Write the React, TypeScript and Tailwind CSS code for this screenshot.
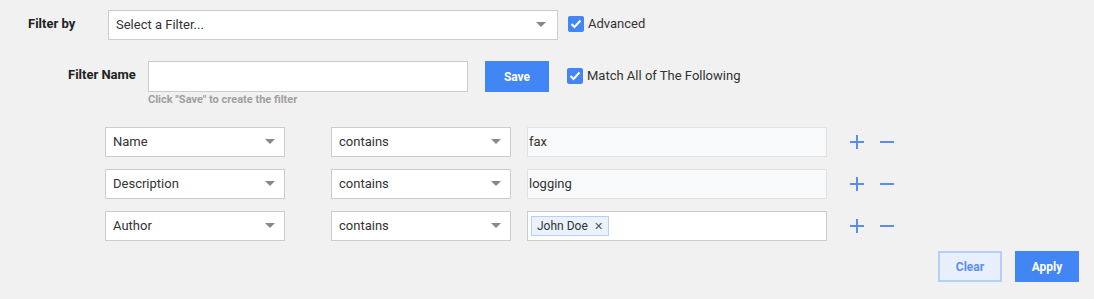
import React from 'react';

const Caret = () => (
  <svg width="10" height="6" viewBox="0 0 10 6" className="shrink-0">
    <path d="M0 0 L10 0 L5 5 Z" fill="#888" />
  </svg>
);

const Check = () => (
  <span className="w-4 h-4 rounded-[2px] bg-[#4285f4] flex items-center justify-center shrink-0">
    <svg width="12" height="10" viewBox="0 0 12 10">
      <path d="M1.5 5 L4.5 8 L10.5 1.5" stroke="#fff" strokeWidth="2" fill="none" />
    </svg>
  </span>
);

const Plus = () => (
  <svg width="14" height="14" viewBox="0 0 14 14">
    <path d="M0 7 H14 M7 0 V14" stroke="#5b8def" strokeWidth="2" />
  </svg>
);

const Minus = () => (
  <svg width="14" height="14" viewBox="0 0 14 14">
    <path d="M0 7 H14" stroke="#5b8def" strokeWidth="2" />
  </svg>
);

const Select = ({ label, width }: { label: string; width: string }) => (
  <div className={`${width} h-[30px] bg-white border border-[#cccccc] flex items-center justify-between pl-[7px] pr-[9px] text-[13px] text-[#333]`}>
    <span>{label}</span>
    <Caret />
  </div>
);

const rows = [
  { field: 'Name', value: 'fax' },
  { field: 'Description', value: 'logging' },
  { field: 'Author', value: '' },
];

const App = () => {
  return (
    <div className="w-[1094px] h-[299px] bg-[#f1f1f1] font-['Roboto',sans-serif] text-[#333] pt-[10px] relative">
      {/* Filter by */}
      <div className="flex items-center">
        <div className="w-[80px] ml-[28px] text-[13px] font-bold text-[#222] -mt-[3px]">Filter by</div>
        <div className="w-[450px] h-[30px] bg-white border border-[#cccccc] flex items-center justify-between pl-[7px] pr-[11px] text-[13px]">
          <span>Select a Filter...</span>
          <Caret />
        </div>
        <div className="flex items-center ml-[10px] gap-[4px] -mt-[3px] text-[13px]">
          <Check />
          <span>Advanced</span>
        </div>
      </div>

      {/* Filter name */}
      <div className="flex items-start mt-[21px]">
        <div className="ml-[68px] w-[80px] h-[30px] flex items-center text-[13px] font-bold text-[#222] -mt-[1px]">Filter Name</div>
        <div className="flex flex-col">
          <div className="w-[320px] h-[31px] bg-white border border-[#cccccc]" />
          <div className="text-[11px] font-bold text-[#a0a0a0] mt-[1px] leading-[13px]">Click "Save" to create the filter</div>
        </div>
        <button className="ml-[17px] w-[64px] h-[31px] bg-[#4285f4] text-white text-[12px] font-bold">Save</button>
        <div className="flex items-center ml-[18px] gap-[4px] h-[30px] text-[13px]">
          <Check />
          <span>Match All of The Following</span>
        </div>
      </div>

      {/* Condition rows */}
      <div className="flex flex-col gap-[12px] mt-[21px] ml-[105px]">
        {rows.map((r) => (
          <div key={r.field} className="flex items-center">
            <Select label={r.field} width="w-[180px]" />
            <div className="ml-[46px]">
              <Select label="contains" width="w-[180px]" />
            </div>
            {r.value ? (
              <div className="ml-[16px] w-[300px] h-[30px] bg-[#f8f9fa] border border-[#e2e2e2] flex items-center pl-[1px] text-[13px]">
                {r.value}
              </div>
            ) : (
              <div className="ml-[16px] w-[300px] h-[30px] bg-white border border-[#cccccc] flex items-center pl-[3px]">
                <span className="h-[20px] px-[5px] bg-[#eaf2fe] border border-[#b7cffa] flex items-center gap-[6px] text-[12px] text-[#333]">
                  John Doe
                  <span className="text-[11px] text-[#555] leading-none">✕</span>
                </span>
              </div>
            )}
            <div className="ml-[23px] flex items-center gap-[16px]">
              <Plus />
              <Minus />
            </div>
          </div>
        ))}
      </div>

      {/* Actions */}
      <div className="flex justify-end gap-[13px] mr-[15px] mt-[10px]">
        <button className="w-[64px] h-[31px] bg-[#e8f0fe] border-2 border-[#b5cefa] text-[#5a8ef0] text-[12px] font-bold">Clear</button>
        <button className="w-[64px] h-[31px] bg-[#4285f4] text-white text-[12px] font-bold">Apply</button>
      </div>
    </div>
  );
};

export default App;
